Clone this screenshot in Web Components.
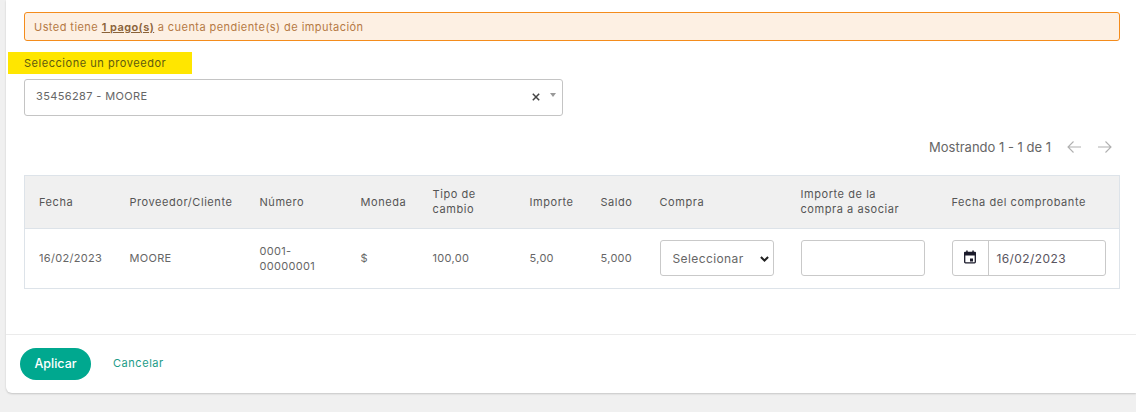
<!DOCTYPE html>
<html lang="es">
<head>
<meta charset="utf-8">
<title>Pagos a cuenta</title>
<style>
  html, body { margin: 0; padding: 0; background: #f0f0f0; }
  body { font-family: Inter, "Open Sans", "Liberation Sans", sans-serif; font-size: 11px; color: #555; height: 412px; overflow: hidden; }
</style>
</head>
<body>
<app-card>
  <alert-banner>Usted tiene <b>1 pago(s)</b> a cuenta pendiente(s) de imputación</alert-banner>
  <marked-label>Seleccione un proveedor</marked-label>
  <provider-select>35456287 - MOORE</provider-select>
  <pager-bar>Mostrando 1 - 1 de 1</pager-bar>
  <payments-table></payments-table>
  <action-bar slot="footer"></action-bar>
</app-card>

<script>
class AppCard extends HTMLElement {
  constructor() {
    super();
    this.attachShadow({ mode: "open" }).innerHTML = `
      <style>
        :host { display: flex; flex-direction: column; height: 393px; margin-left: 6px; background: #fff; border-radius: 0 0 0 6px; box-shadow: 0 1px 2px rgba(0,0,0,.18); box-sizing: border-box; }
        .body { flex: 1; padding: 12px 16px 0 18px; display: flex; flex-direction: column; }
      </style>
      <div class="body"><slot></slot></div>
      <slot name="footer"></slot>
    `;
  }
}

class AlertBanner extends HTMLElement {
  constructor() {
    super();
    this.attachShadow({ mode: "open" }).innerHTML = `
      <style>
        :host { display: flex; align-items: center; height: 29px; box-sizing: border-box; padding: 0 9px; background: #fdf0e3; border: 1px solid #f48c1c; border-radius: 3px; color: #b57a45; letter-spacing: .44px; }
        ::slotted(b) { font-weight: 600; text-decoration: underline; color: #8a6238; }
      </style>
      <span><slot></slot></span>
    `;
  }
}

class MarkedLabel extends HTMLElement {
  constructor() {
    super();
    this.attachShadow({ mode: "open" }).innerHTML = `
      <style>
        :host { display: flex; align-items: center; align-self: flex-start; width: 184px; height: 22px; box-sizing: border-box; margin: 11px 0 5px -16px; padding-left: 16px; background: #ffe600; color: #5e5a10; letter-spacing: .54px; }
      </style>
      <slot></slot>
    `;
  }
}

class ProviderSelect extends HTMLElement {
  constructor() {
    super();
    this.attachShadow({ mode: "open" }).innerHTML = `
      <style>
        :host { display: flex; align-items: center; width: 539px; height: 37px; box-sizing: border-box; padding: 0 6px 2px 11px; border: 1px solid #c4c4c4; border-radius: 3px; color: #666; letter-spacing: .37px; }
        .value { flex: 1; margin-top: -1px; }
        svg { display: block; }
        .x { margin-right: 10px; }
      </style>
      <span class="value"><slot></slot></span>
      <svg class="x" width="8" height="8" viewBox="0 0 8 8"><path d="M.8.8l6.4 6.4M7.2.8L.8 7.2" stroke="#444" stroke-width="1.5" fill="none"/></svg>
      <svg width="6" height="4" viewBox="0 0 6 4" style="margin-top:-3px"><path d="M0 0h6L3 4z" fill="#999"/></svg>
    `;
  }
}

class PagerBar extends HTMLElement {
  constructor() {
    super();
    this.attachShadow({ mode: "open" }).innerHTML = `
      <style>
        :host { display: flex; align-items: center; justify-content: flex-end; gap: 16px; height: 24px; margin: 19px 8px 16px 0; color: #666; font-size: 13px; }
        .arrows { display: flex; gap: 17px; }
        svg { display: block; }
      </style>
      <span><slot></slot></span>
      <div class="arrows">
        <svg width="14" height="12" viewBox="0 0 14 12"><path d="M14 6H1M6.5.5L1 6l5.5 5.5" stroke="#b0b0b0" stroke-width="1.1" fill="none"/></svg>
        <svg width="14" height="12" viewBox="0 0 14 12"><path d="M0 6h13M7.5.5L13 6l-5.500 5.500" stroke="#b0b0b0" stroke-width="1.1" fill="none"/></svg>
      </div>
    `;
  }
}

class PaymentsTable extends HTMLElement {
  constructor() {
    super();
    this.attachShadow({ mode: "open" }).innerHTML = `
      <style>
        :host { display: block; width: 1096px; }
        table { width: 100%; border-collapse: collapse; table-layout: fixed; font-size: 11px; color: #555; }
        th, td { box-sizing: border-box; padding: 0 0 0 14px; text-align: left; line-height: 15px; border: 1px solid #dde3e9; border-width: 1px 0; }
        th { height: 53px; background: #f0f0f0; font-weight: 400; letter-spacing: .56px; color: #555; }
        td { height: 60px; color: #666; letter-spacing: .3px; }
        td.ctl { padding-bottom: 1px; }
        table { border-left: 1px solid #dde3e9; border-right: 1px solid #dde3e9; }
        select, .box { box-sizing: border-box; height: 36px; border: 1px solid #c9c9c9; border-radius: 3px; background: #fff; font: inherit; font-size: 12px; color: #666; letter-spacing: .4px; display: block; }
        .pick { position: relative; display: block; width: 114px; }
        .pick svg { position: absolute; left: 100px; top: 16px; pointer-events: none; }
        select { width: 114px; padding: 0 0 0 12px; appearance: none; }
        input.box { width: 124px; padding: 0 8px; outline: 0; }
        .date { display: flex; width: 154px; align-items: stretch; padding: 0; }
        .cal { width: 36px; border-right: 1px solid #c9c9c9; display: flex; align-items: center; justify-content: center; padding-bottom: 3px; box-sizing: border-box; }
        .val { padding-left: 8px; display: flex; align-items: center; color: #5a5560; }
      </style>
      <table>
        <colgroup>
          <col style="width:91px"><col style="width:130px"><col style="width:101px"><col style="width:72px"><col style="width:97px">
          <col style="width:71px"><col style="width:59px"><col style="width:141px"><col style="width:151px"><col>
        </colgroup>
        <thead><tr>
          <th>Fecha</th><th>Proveedor/Cliente</th><th>Número</th><th>Moneda</th><th>Tipo de<br>cambio</th>
          <th>Importe</th><th>Saldo</th><th>Compra</th><th>Importe de la<br>compra a asociar</th><th>Fecha del comprobante</th>
        </tr></thead>
        <tbody><tr>
          <td>16/02/2023</td><td>MOORE</td><td>0001-<br>00000001</td><td>$</td><td>100,00</td>
          <td>5,00</td><td>5,000</td>
          <td class="ctl"><span class="pick"><select><option>Seleccionar</option></select>
            <svg width="9" height="6" viewBox="0 0 9 6"><path d="M.9 1l3.600 3.500L8.100 1" stroke="#222" stroke-width="2" fill="none"/></svg></span></td>
          <td class="ctl"><input class="box" type="text"></td>
          <td class="ctl"><div class="box date">
            <span class="cal"><svg width="14" height="14" viewBox="0 0 14 14"><path d="M1.700 3.500h10.600V12a.8.8 0 0 1-.8.800h-9a.8.8 0 0 1-.8-.8z" fill="none" stroke="#1a1a2a" stroke-width="1.300"/><path d="M1 2.800a1 1 0 0 1 1-1h10a1 1 0 0 1 1 1v2.600H1zM3.200.4h1.500v2H3.200zM9.300.4h1.500v2H9.300zM7 8.600h3v3H7z" fill="#1a1a2a"/></svg></span>
            <span class="val">16/02/2023</span>
          </div></td>
        </tr></tbody>
      </table>
    `;
  }
}

class ActionBar extends HTMLElement {
  constructor() {
    super();
    this.attachShadow({ mode: "open" }).innerHTML = `
      <style>
        :host { display: flex; align-items: center; gap: 22px; height: 59px; box-sizing: border-box; padding: 0 0 0 14px; border-top: 1px solid #ebebeb; }
        button { width: 71px; height: 32px; border: 0; border-radius: 16px; padding: 0 0 2px; background: #00a88f; color: #fff; font: 500 12.5px Inter, "Open Sans", sans-serif; }
        a { color: #1c9c88; letter-spacing: .55px; font-size: 11px; margin-top: -2px; }
      </style>
      <button>Aplicar</button>
      <a>Cancelar</a>
    `;
  }
}

customElements.define("app-card", AppCard);
customElements.define("alert-banner", AlertBanner);
customElements.define("marked-label", MarkedLabel);
customElements.define("provider-select", ProviderSelect);
customElements.define("pager-bar", PagerBar);
customElements.define("payments-table", PaymentsTable);
customElements.define("action-bar", ActionBar);
</script>
</body>
</html>
